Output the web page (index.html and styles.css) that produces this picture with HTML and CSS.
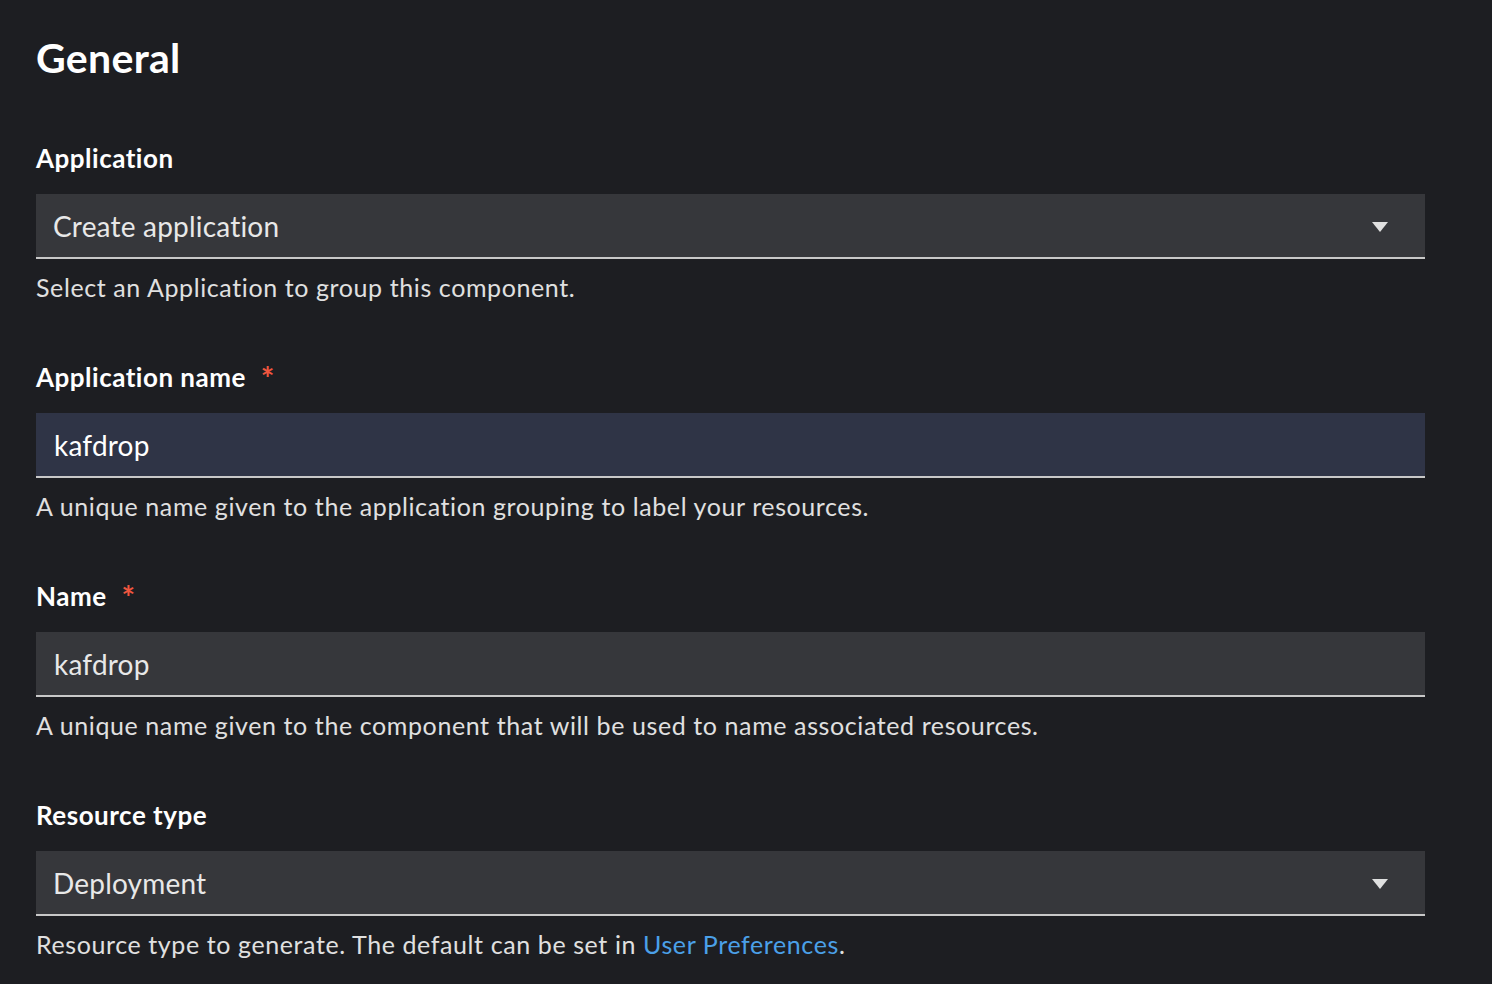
FILE: index.html
```html
<!DOCTYPE html>
<html>
<head>
<meta charset="utf-8">
<link rel="stylesheet" href="styles.css">
</head>
<body>
<div class="page">
  <h2 class="section-title">General</h2>

  <div class="group">
    <div class="label">Application</div>
    <div class="control select">
      <span class="value">Create application</span>
      <svg class="caret" width="16" height="10" viewBox="0 0 16 10"><path d="M0 0 H16 L8 10 Z" fill="#e0e0e0"/></svg>
    </div>
    <div class="helper">Select an Application to group this component.</div>
  </div>

  <div class="group">
    <div class="label">Application name <span class="req">*</span></div>
    <div class="control input focus">
      <span class="value">kafdrop</span>
    </div>
    <div class="helper">A unique name given to the application grouping to label your resources.</div>
  </div>

  <div class="group">
    <div class="label">Name <span class="req">*</span></div>
    <div class="control input">
      <span class="value">kafdrop</span>
    </div>
    <div class="helper">A unique name given to the component that will be used to name associated resources.</div>
  </div>

  <div class="group">
    <div class="label">Resource type</div>
    <div class="control select">
      <span class="value">Deployment</span>
      <svg class="caret" width="16" height="10" viewBox="0 0 16 10"><path d="M0 0 H16 L8 10 Z" fill="#e0e0e0"/></svg>
    </div>
    <div class="helper">Resource type to generate. The default can be set in <a class="link">User Preferences</a>.</div>
  </div>
</div>
</body>
</html>
```

FILE: styles.css
```css
html, body {
  margin: 0;
  padding: 0;
  background: #1d1e22;
  height: 100%;
}
body {
  font-family: "Lato", "Liberation Sans", sans-serif;
  font-variant-ligatures: none;
  color: #e8e8e8;
}
.page {
  padding: 32px 67px 0 36px;
}
.section-title {
  margin: 0;
  font-size: 41px;
  font-weight: 700;
  color: #ffffff;
  line-height: 52px;
  letter-spacing: 0.3px;
}
.group {
  display: flex;
  flex-direction: column;
}
.label {
  margin-top: 58px;
  font-size: 26px;
  font-weight: 700;
  color: #ffffff;
  line-height: 32px;
  height: 32px;
  margin-bottom: 20px;
  letter-spacing: 0.5px;
}
.req {
  color: #f0563f;
  margin-left: 8px;
  font-size: 32px;
  line-height: 36px;
  vertical-align: top;
}
.control {
  height: 63px;
  border-bottom: 2px solid #c8c8c8;
  background: #36373b;
  display: flex;
  align-items: center;
  padding: 0 37px 0 17px;
}
.control.input { padding-left: 18px; }
.control.focus { background: #2f3446; }
.value {
  flex: 1;
  font-size: 28px;
  color: #e8e8e8;
  letter-spacing: 0.2px;
}
.focus .value { color: #ffffff; }
.caret { flex: none; margin-top: 2px; }
.helper {
  margin-top: 12px;
  font-size: 25px;
  line-height: 32px;
  color: #e0e0e0;
  letter-spacing: 0.6px;
}
.link {
  color: #4ba0e8;
  text-decoration: none;
}
```
